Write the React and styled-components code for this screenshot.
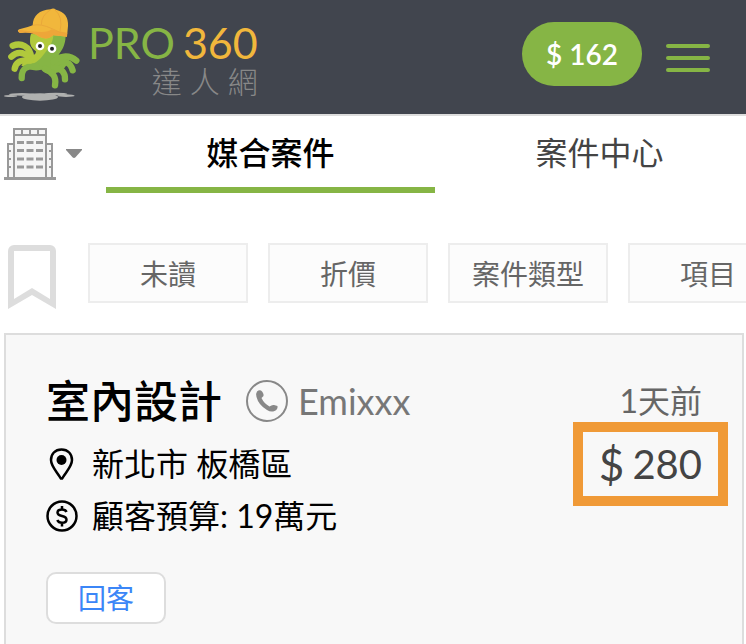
import React, { useState } from 'react'
import styled, { createGlobalStyle, ThemeProvider } from 'styled-components'

const theme = {
  font: `Lato, "Noto Sans CJK TC", sans-serif`,
  bg: {
    header: '#41454e',
    card: '#f8f8f8',
    chip: '#fcfcfc',
  },
  border: {
    primary: '#dddddd',
    light: '#ededed',
  },
  text: {
    primary: '#000',
    secondary: '#444',
    tertiary: '#666',
    muted: '#888',
  },
  colors: {
    green: '#86b545',
    yellow: '#f1b73c',
    orange: '#f09a37',
    blue: '#3b86f7',
  },
}

const GlobalStyle = createGlobalStyle`
  * {
    box-sizing: border-box;
  }

  body {
    margin: 0;
    background-color: #fff;
    font-family: ${props => props.theme.font};
    overflow-x: hidden;
  }

  button {
    font-family: inherit;
    cursor: pointer;
  }

  svg {
    display: block;
    flex: none;
  }
`

const HeaderBar = styled.header`
  display: flex;
  align-items: center;
  height: 116px;
  padding: 0 36px 0 4px;
  background-color: ${props => props.theme.bg.header};
  border-bottom: 2px solid ${props => props.theme.border.primary};
`

const LogoLink = styled.a`
  display: flex;
  align-items: center;
  gap: 6px;
  margin-right: auto;
  padding-bottom: 6px;
  text-decoration: none;
`

const LogoText = styled.span`
  display: grid;
  justify-items: end;
  padding-top: 14px;
`

const LogoName = styled.span`
  display: flex;
  gap: 8px;
  font-size: 43px;
  line-height: 40px;
  color: ${props => props.theme.colors.green};

  em {
    font-style: normal;
    color: ${props => props.theme.colors.yellow};
  }
`

const LogoSub = styled.span`
  display: flex;
  gap: 8px;
  font-size: 30px;
  line-height: 36px;
  font-weight: 300;
  color: ${props => props.theme.text.muted};
`

const Balance = styled.button`
  height: 64px;
  padding: 0 24px;
  margin: 0 24px 6px 0;
  border: 0;
  border-radius: 32px;
  background-color: ${props => props.theme.colors.green};
  color: #fff;
  font-size: 28px;
  font-weight: 600;
`

const MenuButton = styled.button`
  display: grid;
  gap: 8px;
  width: 44px;
  padding: 2px 0 0;
  border: 0;
  background: none;

  span {
    height: 4px;
    border-radius: 2px;
    background-color: ${props => props.theme.colors.green};
  }
`

const TabBar = styled.nav`
  display: flex;
  height: 77px;
  overflow: hidden;
`

const CategoryButton = styled.button`
  display: flex;
  align-items: center;
  gap: 10px;
  flex: 0 0 106px;
  padding: 0 4px 2px;
  border: 0;
  background: none;
`

const Tab = styled.button`
  flex: 1 0 329px;
  padding: 0 0 2px;
  border: 0;
  border-bottom: 6px solid ${props => props.$current ? props.theme.colors.green : 'transparent'};
  background: none;
  color: ${props => props.$current ? props.theme.text.primary : props.theme.text.secondary};
  font-size: 32px;
  font-weight: ${props => props.$current ? 500 : 400};
`

const FilterBar = styled.div`
  display: flex;
  gap: 20px;
  padding: 50px 0 30px 8px;
  overflow: hidden;
`

const BookmarkButton = styled.button`
  flex: 0 0 60px;
  height: 60px;
  padding: 2px 0 0;
  border: 0;
  background: none;
`

const Chip = styled.button`
  flex: 0 0 160px;
  height: 60px;
  padding: 0;
  border: 2px solid ${props => props.theme.border.light};
  background-color: ${props => props.theme.bg.chip};
  color: ${props => props.theme.text.tertiary};
  font-size: 28px;
`

const Card = styled.article`
  display: grid;
  grid-template-columns: 1fr auto;
  margin: 0 2px 0 4px;
  padding: 40px;
  border: 2px solid ${props => props.theme.border.primary};
  background-color: ${props => props.theme.bg.card};
`

const CardHead = styled.div`
  display: flex;
  align-items: center;
  height: 52px;
  margin-bottom: 11px;

  h2 {
    margin: 0 24px 0 0;
    font-size: 44px;
    line-height: 52px;
    font-weight: 500;
  }
`

const Customer = styled.span`
  display: flex;
  align-items: center;
  gap: 10px;
  color: #777;
  font-size: 36px;
  line-height: 52px;
`

const Detail = styled.p`
  display: flex;
  align-items: center;
  gap: 14px;
  margin: 0;
  font-size: 32px;
  line-height: 52px;
`

const Side = styled.div`
  display: grid;
  align-content: start;
  justify-items: end;
`

const Time = styled.time`
  color: ${props => props.theme.text.tertiary};
  font-size: 32px;
  line-height: 52px;
`

const Price = styled.strong`
  display: flex;
  gap: 8px;
  margin: -5px -26px 0 0;
  padding: 0 16px;
  border: 10px solid ${props => props.theme.colors.orange};
  color: ${props => props.theme.text.secondary};
  font-size: 40px;
  line-height: 64px;
  font-weight: 400;

  span {
    font-size: 44px;
  }
`

const ReplyButton = styled.button`
  justify-self: start;
  width: 120px;
  height: 52px;
  margin-top: 30px;
  padding: 0 0 2px;
  border: 2px solid ${props => props.theme.border.primary};
  border-radius: 10px;
  background-color: #fff;
  color: ${props => props.theme.colors.blue};
  font-size: 28px;
`

const Octopus = () => (
  <svg width='78' height='100' viewBox='12 10 234 300' fill='none'>
    <g fill='#b0b1b0'>
      <ellipse cx='120' cy='289' rx='54' ry='11' />
      <ellipse cx='66' cy='281' rx='40' ry='4' />
      <ellipse cx='168' cy='280' rx='34' ry='4' />
      <ellipse cx='32' cy='286' rx='20' ry='3' />
      <ellipse cx='198' cy='285' rx='26' ry='4' />
    </g>
    <path d='M93 100C84 136 100 146 114 154C118 172 92 190 76 194C84 204 100 214 124 207C136 222 152 222 170 216C186 214 196 202 204 184C196 176 186 176 174 172C172 158 198 148 197 100Z' fill='#86b545' />
    <path d='M93 100C84 136 100 144 108 152C108 166 92 166 84 158L64 196C100 198 120 178 134 158C150 136 158 126 160 106Z' fill='#b1c93c' />
    <g stroke='#86b545' strokeWidth='19' strokeLinecap='round' strokeLinejoin='round'>
      <path d='M110 198C84 194 64 200 65 232' />
      <path d='M136 204C158 216 170 228 165 254' />
      <path d='M160 198C184 204 196 214 195 236' />
      <path d='M166 186C196 178 212 186 218 209' />
      <path d='M160 184C176 166 206 160 229 180' />
    </g>
    <g stroke='#b1c93c' strokeWidth='19' strokeLinecap='round' strokeLinejoin='round'>
      <path d='M94 172C90 134 62 126 38 135' />
      <path d='M86 168C70 154 50 152 34 168' />
      <path d='M90 180C62 176 48 184 44 204' />
    </g>
    <circle cx='120' cy='136' r='13' fill='#fff' />
    <circle cx='156' cy='144' r='13' fill='#fff' />
    <circle cx='120' cy='136' r='6' fill='#222' />
    <circle cx='156' cy='144' r='6' fill='#222' />
    <path d='M98 74Q100 30 152 26Q160 21 168 27Q206 36 204 76L201 108Q184 106 160 104Q142 120 118 108Q94 92 60 97Q48 90 58 86Q88 78 98 74Z' fill='#f1b73c' />
    <path d='M58 87Q94 94 126 94Q146 94 154 86Q176 94 201 99L201 108Q184 106 160 104Q142 120 118 108Q94 92 60 97Q50 92 58 87Z' fill='#eea639' />
    <path d='M98 74Q122 68 156 84Q176 96 202 98M124 72Q124 44 152 27M164 27Q190 48 180 92' stroke='#e5a03a' strokeWidth='2' />
  </svg>
)

const Building = () => (
  <svg width='52' height='52' viewBox='0 0 52 52' fill='none' stroke='#999' strokeWidth='2'>
    <path d='M4 16h6v34H4zM42 16h6v34h-6z' fill='#f5f5f5' />
    <path d='M10 1h32v49H10z' fill='#f5f5f5' />
    <path d='M10 7h32M18 2v5M26 2v5M34 2v5' />
    <path d='M0 50.500h52' strokeWidth='3' />
    <path d='M13 14.500h26M13 22.500h26M13 31h26M13 39h26' strokeWidth='3' strokeDasharray='7 2.500' />
    <path d='M5 23h2M5 31h2M5 39h2M45 23h2M45 31h2M45 39h2' />
  </svg>
)

const Caret = () => (
  <svg width='16' height='9' viewBox='0 0 16 9'>
    <path d='M0 0h16v1L9.500 8.200Q8 9.600 6.500 8.200L0 1z' fill='#888' />
  </svg>
)

const Bookmark = () => (
  <svg width='48' height='64' viewBox='0 0 48 64'>
    <path fillRule='evenodd' d='M6 0h36a6 6 0 0 1 6 6v58L24 50 0 64V6a6 6 0 0 1 6-6zM6 6v48l18-11 18 11V6z' fill='#ddd' />
  </svg>
)

const Phone = () => (
  <svg width='42' height='42' viewBox='0 0 42 42'>
    <circle cx='21' cy='21' r='20' fill='none' stroke='#888' strokeWidth='2' />
    <path d='M11 11.500Q13 9.500 15 10.500Q18 13 17.500 16L15.500 18Q18 23.500 23.500 26.500Q26 24.500 28 25L31.500 26Q32 29.500 28.500 31Q25 32.500 21 30Q12.500 25 10.500 17Q9.500 13.500 11 11.500Z' fill='#888' />
  </svg>
)

const Pin = () => (
  <svg width='32' height='32' viewBox='0 0 32 32'>
    <path d='M15.500 1.500C9 1.500 5 6 5 12c0 6.500 6.500 12.500 9.500 18 .5.800 1.500.800 2 0C19.500 24.500 26 18.500 26 12c0-6-4-10.500-10.500-10.500z' fill='none' stroke='#000' strokeWidth='2.500' />
    <circle cx='15.500' cy='12' r='5' />
  </svg>
)

const Coin = () => (
  <svg width='32' height='32' viewBox='0 0 32 32' fill='none' stroke='#000' strokeWidth='2.500'>
    <circle cx='16' cy='16' r='14.500' />
    <path d='M20.500 12Q19.500 9.500 16 9.500Q11.500 9.500 11.500 12.500Q11.500 15 16 16Q20.500 17 20.500 19.800Q20.500 22.800 16 22.800Q12.500 22.800 11.300 20M16 6v4M16 22.500v4' />
  </svg>
)

const tabs = ['媒合案件', '案件中心']
const filters = ['未讀', '折價', '案件類型', '項目']

const Header = () => (
  <HeaderBar>
    <LogoLink href='#'>
      <Octopus />
      <LogoText>
        <LogoName>PRO <em>360</em></LogoName>
        <LogoSub><span>達</span><span>人</span><span>網</span></LogoSub>
      </LogoText>
    </LogoLink>
    <Balance>$ 162</Balance>
    <MenuButton aria-label='選單'>
      <span />
      <span />
      <span />
    </MenuButton>
  </HeaderBar>
)

const CaseCard = ({ title, customer, time, price, location, budget }) => (
  <Card>
    <div>
      <CardHead>
        <h2>{title}</h2>
        <Customer><Phone />{customer}</Customer>
      </CardHead>
      <Detail><Pin />{location}</Detail>
      <Detail><Coin />顧客預算: {budget}</Detail>
      <ReplyButton>回客</ReplyButton>
    </div>
    <Side>
      <Time>{time}</Time>
      <Price><span>$</span>{price}</Price>
    </Side>
  </Card>
)

const App = () => {
  const [currentTab, setCurrentTab] = useState(tabs[0])

  return (
    <ThemeProvider theme={theme}>
      <GlobalStyle />
      <Header />
      <TabBar>
        <CategoryButton aria-label='類別'>
          <Building />
          <Caret />
        </CategoryButton>
        {tabs.map(tab => (
          <Tab key={tab} $current={tab === currentTab} onClick={() => setCurrentTab(tab)}>{tab}</Tab>
        ))}
      </TabBar>
      <FilterBar>
        <BookmarkButton aria-label='收藏'><Bookmark /></BookmarkButton>
        {filters.map(filter => <Chip key={filter}>{filter}</Chip>)}
      </FilterBar>
      <CaseCard
        title='室內設計'
        customer='Emixxx'
        time='1天前'
        price='280'
        location='新北市 板橋區'
        budget='19萬元'
      />
    </ThemeProvider>
  )
}

export default App
